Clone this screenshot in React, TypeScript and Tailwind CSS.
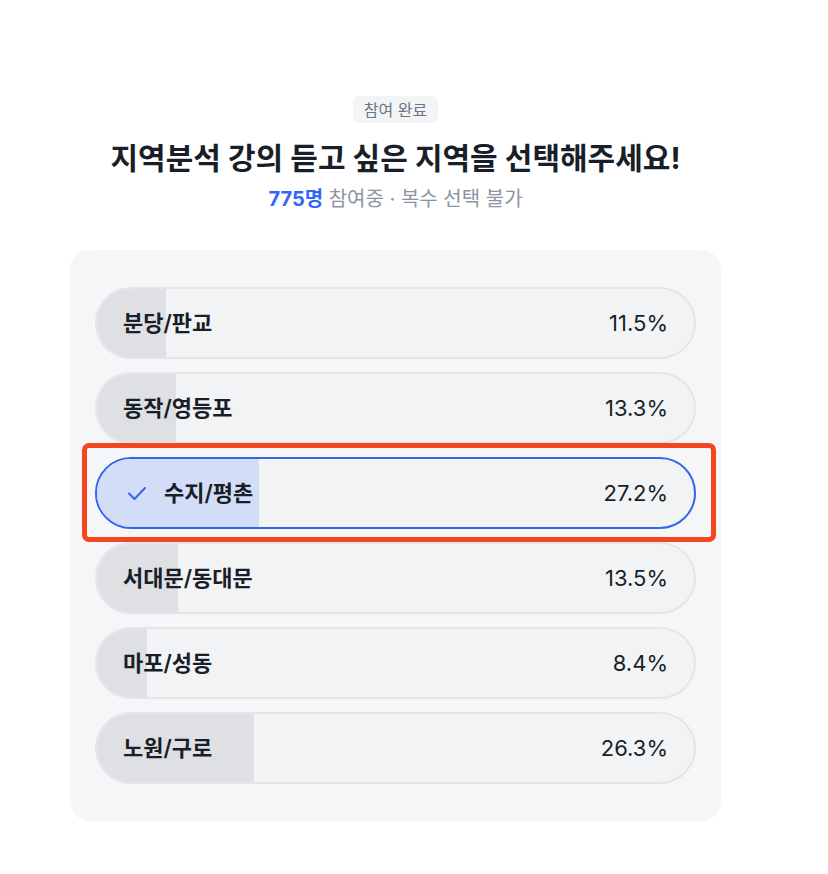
import React from "react";

const options = [
  { label: "분당/판교", pct: 11.5 },
  { label: "동작/영등포", pct: 13.3 },
  { label: "수지/평촌", pct: 27.2, selected: true },
  { label: "서대문/동대문", pct: 13.5 },
  { label: "마포/성동", pct: 8.4 },
  { label: "노원/구로", pct: 26.3 },
];

export default function App() {
  return (
    <div
      className="w-[828px] h-[874px] bg-white"
      style={{ fontFamily: '"Inter", "Noto Sans CJK KR", sans-serif' }}
    >
      <div className="ml-[70px] w-[651px] pt-[96px] flex flex-col items-center">
        <div className="h-[27px] px-[11px] rounded-[6px] bg-[#f2f4f6] text-[#6b7684] text-[16px] flex items-center">
          참여 완료
        </div>
        <h1 className="mt-[17px] text-[30px] leading-[36px] font-bold text-[#191f28]">
          지역분석 강의 듣고 싶은 지역을 선택해주세요!
        </h1>
        <p className="mt-[10px] text-[20px] leading-[26px] text-[#8b95a1]">
          <span className="text-[#3168f6] font-bold">775명</span> 참여중 · 복수 선택 불가
        </p>
        <div className="mt-[38px] w-[651px] rounded-[20px] bg-[#f5f6f8] px-[25px] py-[37px] flex flex-col gap-[13px]">
          {options.map((o) => (
            <div key={o.label} className="relative">
              <div
                className={
                  "relative h-[72px] rounded-full overflow-hidden border-2 flex items-center justify-between pl-[26px] pr-[26px] " +
                  (o.selected
                    ? "border-[#3366ee] bg-[#f2f3f5]"
                    : "border-[#e4e5e9] bg-[#f2f3f5]")
                }
              >
                <div
                  className={
                    "absolute left-0 top-0 bottom-0 " +
                    (o.selected ? "bg-[#d4ddf8]" : "bg-[#dfe0e4]")
                  }
                  style={{ width: `${o.pct}%` }}
                />
                <div className="relative flex items-center gap-[16px]">
                  {o.selected && (
                    <svg width="22" height="22" viewBox="0 0 22 22" fill="none" className="ml-[3px]">
                      <path
                        d="M3 11.5 L8.5 17 L19 6"
                        stroke="#3366ee"
                        strokeWidth="2"
                        strokeLinecap="round"
                        strokeLinejoin="round"
                      />
                    </svg>
                  )}
                  <span className="text-[22px] font-semibold text-[#191f28]">
                    {o.label}
                  </span>
                </div>
                <span className="relative text-[22px] text-[#191f28]">
                  {o.pct}%
                </span>
              </div>
              {o.selected && (
                <div className="absolute left-[-13px] right-[-20px] top-[-14px] bottom-[-13px] border-[5px] border-[#f4461f] rounded-[7px] pointer-events-none" />
              )}
            </div>
          ))}
        </div>
      </div>
    </div>
  );
}
